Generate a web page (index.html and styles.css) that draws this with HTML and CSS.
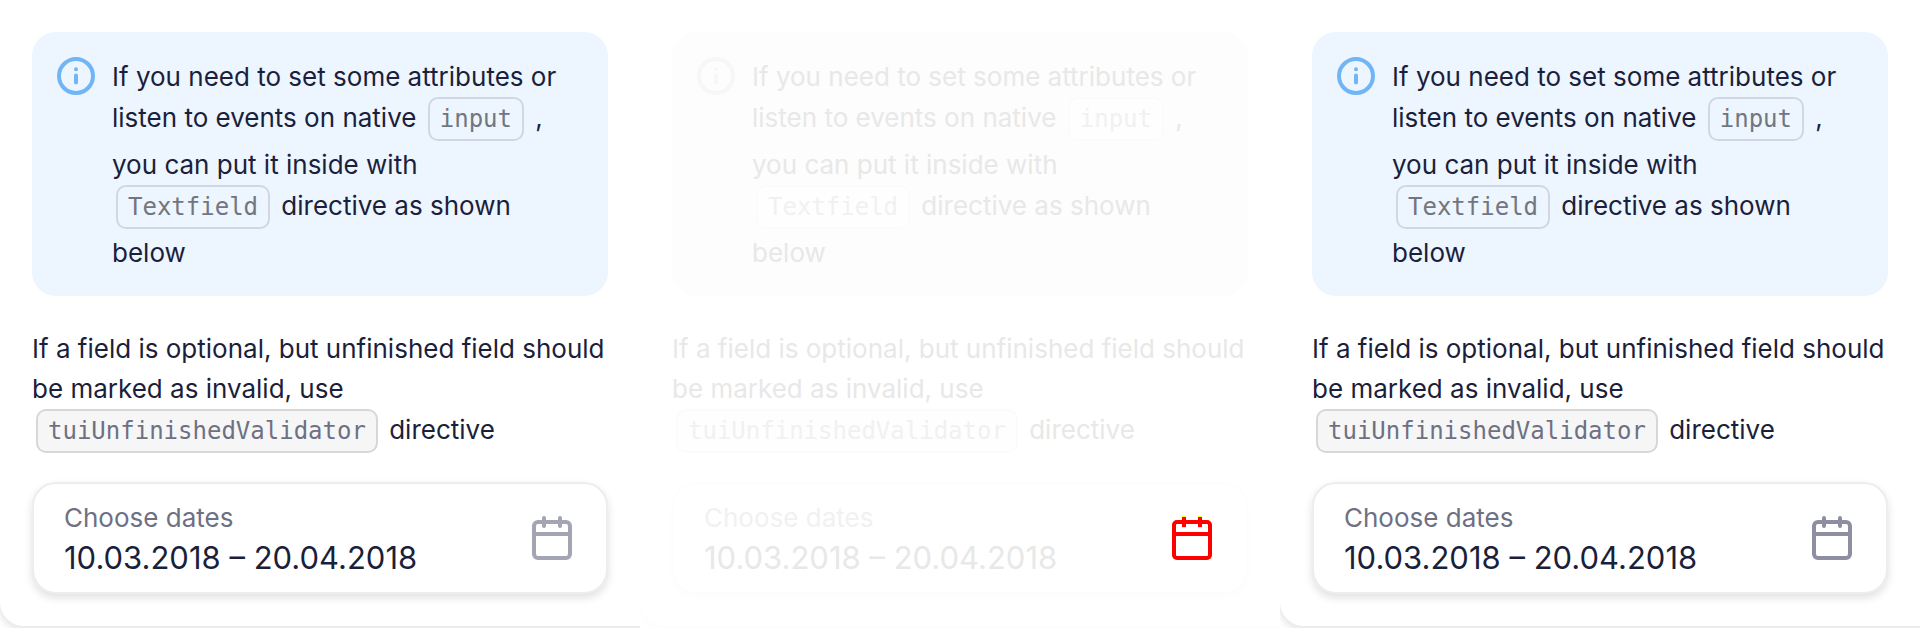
FILE: index.html
```html
<!DOCTYPE html>
<html lang="en">
<head>
<meta charset="utf-8">
<meta name="viewport" content="width=device-width, initial-scale=1">
<title>Date range field</title>
<link rel="stylesheet" href="styles.css">
</head>
<body>
<main class="panels">
  <section class="panel">
    <div class="card">
      <div class="notice">
        <svg class="notice-icon" viewBox="0 0 40 40" aria-hidden="true"><circle cx="20" cy="20" r="17"/><path d="M20 13.3v.01M20 19.5v7"/></svg>
        <p class="text">If you need to set some attributes or<br>listen to events on native <code class="code">input</code> ,<br>you can put it inside with<br><code class="code">Textfield</code> directive as shown<br>below</p>
      </div>
      <p class="text">If a field is optional, but unfinished field should<br>be marked as invalid, use<br><code class="code code-filled">tuiUnfinishedValidator</code> directive</p>
      <div class="field">
        <div class="field-body">
          <label class="field-label" for="dates-1">Choose dates</label>
          <input class="field-input" id="dates-1" type="text" value="10.03.2018 – 20.04.2018">
        </div>
        <button class="field-button" type="button" aria-label="Open calendar">
          <svg class="calendar" viewBox="0 0 48 48" aria-hidden="true"><rect x="6" y="8" width="36" height="36" rx="4"/><path d="M6 20h36M16 4v8M32 4v8"/></svg>
        </button>
      </div>
    </div>
  </section>

  <section class="panel panel-diff">
    <div class="card">
      <div class="notice">
        <svg class="notice-icon" viewBox="0 0 40 40" aria-hidden="true"><circle cx="20" cy="20" r="17"/><path d="M20 13.3v.01M20 19.5v7"/></svg>
        <p class="text">If you need to set some attributes or<br>listen to events on native <code class="code">input</code> ,<br>you can put it inside with<br><code class="code">Textfield</code> directive as shown<br>below</p>
      </div>
      <p class="text">If a field is optional, but unfinished field should<br>be marked as invalid, use<br><code class="code code-filled">tuiUnfinishedValidator</code> directive</p>
      <div class="field">
        <div class="field-body">
          <label class="field-label" for="dates-2">Choose dates</label>
          <input class="field-input" id="dates-2" type="text" value="10.03.2018 – 20.04.2018">
        </div>
        <button class="field-button" type="button" aria-label="Open calendar">
          <svg class="calendar calendar-diff" viewBox="0 0 48 48" aria-hidden="true"><path class="edge" d="M5 12q0-5 5-5M38 7q5 0 5 5M43 40q0 5-5 5M10 45q-5 0-5-5M14 3h4M30 3h4M14 13h4M30 13h4"/><rect x="6" y="8" width="36" height="36" rx="3"/><path d="M6 20h36M16 3v10M32 3v10"/></svg>
        </button>
      </div>
    </div>
  </section>

  <section class="panel panel-dark-icon">
    <div class="card">
      <div class="notice">
        <svg class="notice-icon" viewBox="0 0 40 40" aria-hidden="true"><circle cx="20" cy="20" r="17"/><path d="M20 13.3v.01M20 19.5v7"/></svg>
        <p class="text">If you need to set some attributes or<br>listen to events on native <code class="code">input</code> ,<br>you can put it inside with<br><code class="code">Textfield</code> directive as shown<br>below</p>
      </div>
      <p class="text">If a field is optional, but unfinished field should<br>be marked as invalid, use<br><code class="code code-filled">tuiUnfinishedValidator</code> directive</p>
      <div class="field">
        <div class="field-body">
          <label class="field-label" for="dates-3">Choose dates</label>
          <input class="field-input" id="dates-3" type="text" value="10.03.2018 – 20.04.2018">
        </div>
        <button class="field-button" type="button" aria-label="Open calendar">
          <svg class="calendar" viewBox="0 0 48 48" aria-hidden="true"><rect x="6" y="8" width="36" height="36" rx="4"/><path d="M6 20h36M16 4v8M32 4v8"/></svg>
        </button>
      </div>
    </div>
  </section>
</main>
</body>
</html>
```
FILE: styles.css
```css
* {
  box-sizing: border-box;
}

body {
  margin: 0;
  background: #fff;
  font-family: Inter, "Liberation Sans", sans-serif;
}

.panels {
  display: grid;
  grid-template-columns: repeat(3, 1fr);
}

.panel {
  --text: #1b1f3b;
  --muted: #6e7084;
  --notice: #edf5ff;
  --info: #70b6f6;
  --code-border: #d1d7e2;
  --code-text: #71767f;
  --code-fill: transparent;
  --filled: #f6f6f6;
  --filled-border: #d7d7d7;
  --field-border: #ededed;
  --shadow: rgba(0, 0, 0, 0.12);
  --edge: #ededed;
  --icon: #a4a5b4;
  overflow: hidden;
  padding-bottom: 2px;
}

.panel-diff {
  --text: #e8e8e8;
  --muted: #f1f1f1;
  --notice: #fdfdfd;
  --info: #f7f7f7;
  --code-border: #fbfbfb;
  --code-text: #f1f1f1;
  --code-fill: #fefefe;
  --filled: #fefefe;
  --filled-border: #fbfbfb;
  --field-border: #fdfdfd;
  --shadow: rgba(0, 0, 0, 0.01);
  --edge: #fdfdfd;
}

.panel-dark-icon {
  --icon: #8d8e9f;
}

.card {
  display: flex;
  flex-direction: column;
  padding: 32px;
  border-radius: 0 0 0 24px;
  background: #fff;
  box-shadow: 0 2px 0 var(--edge), 0 4px 8px var(--shadow);
}

.notice {
  display: flex;
  gap: 16px;
  margin-bottom: 32px;
  padding: 24px 24px 22px;
  border-radius: 24px;
  background: var(--notice);
}

.notice-icon {
  flex: none;
  width: 40px;
  height: 40px;
  fill: none;
  stroke: var(--info);
  stroke-width: 4;
  stroke-linecap: round;
}

.text {
  margin: 0;
  padding: 1px 0;
  color: var(--text);
  font-size: 26px;
  line-height: 40px;
  white-space: nowrap;
}

.code {
  display: inline-block;
  margin: 0 4px 4px;
  padding: 4px 10px;
  border: 2px solid var(--code-border);
  border-radius: 10px;
  background: var(--code-fill);
  color: var(--code-text);
  font-family: "DejaVu Sans Mono", monospace;
  font-size: 24px;
  line-height: 32px;
}

.code-filled {
  border-color: var(--filled-border);
  background: var(--filled);
  color: var(--muted);
}

.field {
  display: flex;
  align-items: center;
  margin-top: 24px;
  padding: 14px 30px;
  border: 2px solid var(--field-border);
  border-radius: 24px;
  background: #fff;
  box-shadow: 0 4px 8px var(--shadow);
}

.field-body {
  display: flex;
  flex: 1;
  flex-direction: column;
  min-width: 0;
}

.field-label {
  color: var(--muted);
  font-size: 26px;
  line-height: 40px;
}

.field-input {
  width: 100%;
  height: 40px;
  padding: 0;
  border: 0;
  outline: 0;
  background: none;
  color: var(--text);
  font-family: inherit;
  font-size: 31px;
  line-height: 40px;
}

.field-button {
  display: flex;
  padding: 0;
  border: 0;
  background: none;
}

.calendar {
  width: 48px;
  height: 48px;
  fill: none;
  stroke: var(--icon);
  stroke-width: 4;
  stroke-linecap: round;
}

.calendar-diff {
  stroke: #f00;
  stroke-linecap: butt;
}

.calendar .edge {
  stroke: #ff0;
  stroke-width: 2;
}
```
